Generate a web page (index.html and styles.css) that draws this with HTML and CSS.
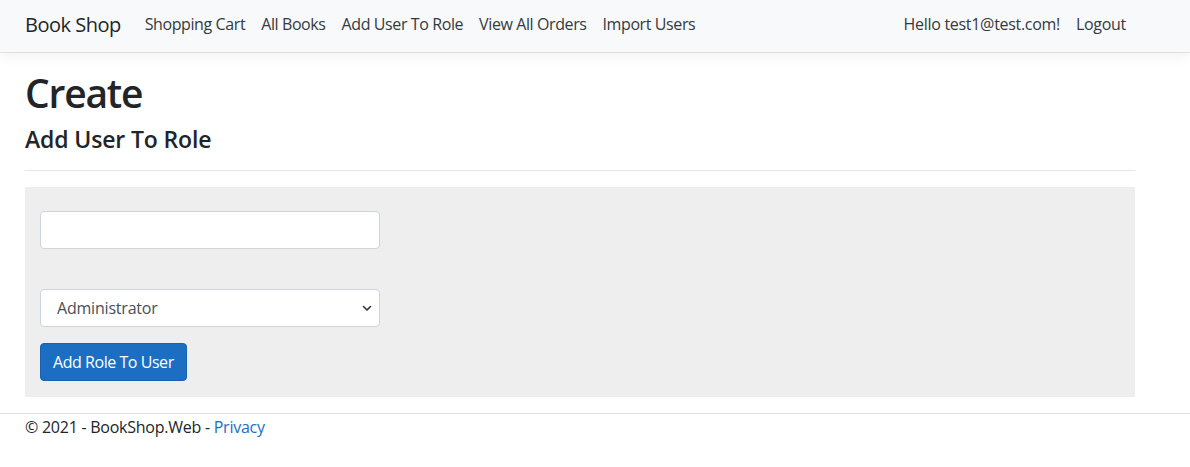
FILE: index.html
```html
<!DOCTYPE html>
<html lang="en">
<head>
<meta charset="utf-8">
<title>Create - BookShop.Web</title>
<link rel="stylesheet" href="styles.css">
</head>
<body>
<header class="navbar">
  <div class="nav-inner">
    <a class="brand" href="#">Book Shop</a>
    <ul class="nav-list">
      <li><a class="nav-link" href="#">Shopping Cart</a></li>
      <li><a class="nav-link" href="#">All Books</a></li>
      <li><a class="nav-link" href="#">Add User To Role</a></li>
      <li><a class="nav-link" href="#">View All Orders</a></li>
      <li><a class="nav-link" href="#">Import Users</a></li>
    </ul>
    <ul class="nav-list nav-right">
      <li><a class="nav-link" href="#">Hello test1@test.com!</a></li>
      <li><a class="nav-link" href="#">Logout</a></li>
    </ul>
  </div>
</header>
<main class="container">
  <h1 class="title">Create</h1>
  <h4 class="subtitle">Add User To Role</h4>
  <hr class="divider">
  <div class="panel">
    <form class="form">
      <div class="form-group">
        <input class="form-control" type="text">
        <span class="validation"></span>
      </div>
      <div class="form-group select-group">
        <div class="select-wrap">
          <select class="form-control form-select">
            <option>Administrator</option>
            <option>User</option>
          </select>
          <svg class="chevron" width="10" height="7" viewBox="0 0 10 7"><path d="M1.5 1.5 L5 5 L8.5 1.5" fill="none" stroke="#333" stroke-width="1.6" stroke-linecap="round" stroke-linejoin="round"/></svg>
        </div>
      </div>
      <button class="btn" type="button">Add Role To User</button>
    </form>
  </div>
</main>
<footer class="footer">
  <div class="footer-inner">&copy; 2021 - BookShop.Web - <a class="link" href="#">Privacy</a></div>
</footer>
</body>
</html>
```

FILE: styles.css
```css
* { box-sizing: border-box; }
html, body { margin: 0; padding: 0; }
body {
  font-family: "Open Sans", "Noto Sans", "Liberation Sans", sans-serif;
  font-size: 16px;
  line-height: 1.5;
  color: #212529;
  background: #fff;
}
a { text-decoration: none; }

.navbar {
  height: 53px;
  background: #f8f9fa;
  border-bottom: 1px solid #dee2e6;
  box-shadow: 0 4px 12px rgba(0,0,0,.05);
}
.nav-inner {
  width: 1110px;
  margin-left: 25px;
  height: 52px;
  padding-bottom: 4px;
  display: flex;
  align-items: center;
}
.brand {
  font-size: 20px;
  color: #212529;
  margin-right: 16px;
  line-height: 30px;
  letter-spacing: -0.5px;
  position: relative;
  top: 1px;
}
.nav-list {
  list-style: none;
  margin: 0;
  padding: 0;
  display: flex;
}
.nav-right { margin-left: auto; margin-right: 1px; }
.nav-link {
  display: block;
  padding: 8px 8px;
  color: #343a40;
  font-size: 16px;
  line-height: 24px;
  letter-spacing: -0.4px;
}
.nav-right .nav-link { letter-spacing: -0.3px; }

.container {
  width: 1110px;
  margin-left: 25px;
  padding-top: 16px;
  padding-bottom: 16px;
}
.title {
  margin: 0 0 8px;
  font-size: 39px;
  line-height: 48px;
  font-weight: 600;
  letter-spacing: -1.2px;
}
.subtitle {
  margin: 0 0 8px;
  font-size: 23px;
  line-height: 29px;
  font-weight: 600;
  letter-spacing: -0.15px;
}
.divider {
  margin: 16px 0 16px;
  border: 0;
  border-top: 1px solid rgba(0,0,0,.1);
}
.panel {
  background: #eeeeee;
  padding: 24px 15px 16px;
}
.form { width: 340px; }
.form-group { margin-bottom: 16px; }
.validation { display: block; height: 24px; }
.form-control {
  display: block;
  width: 100%;
  height: 38px;
  padding: 6px 12px;
  font-family: inherit;
  font-size: 16px;
  line-height: 24px;
  color: #495057;
  background: #fff;
  border: 1px solid #ced4da;
  border-radius: 4px;
}
.select-wrap { position: relative; }
.form-select {
  -webkit-appearance: none;
  appearance: none;
  padding-left: 16px;
  letter-spacing: -0.2px;
}
.chevron {
  position: absolute;
  right: 8px;
  top: 16px;
  pointer-events: none;
}
.btn {
  display: inline-block;
  height: 38px;
  padding: 6px 12px;
  font-family: inherit;
  font-size: 16px;
  line-height: 24px;
  color: #fff;
  background: #1b6ec2;
  border: 1px solid #1861ac;
  border-radius: 4px;
  letter-spacing: -0.45px;
}

.footer {
  border-top: 1px solid #dee2e6;
  color: #212529;
}
.footer-inner {
  margin-left: 25px;
  line-height: 24px;
  font-size: 16px;
  padding-top: 1px;
  letter-spacing: -0.25px;
}
.link { color: #1b6ec2; }
```
